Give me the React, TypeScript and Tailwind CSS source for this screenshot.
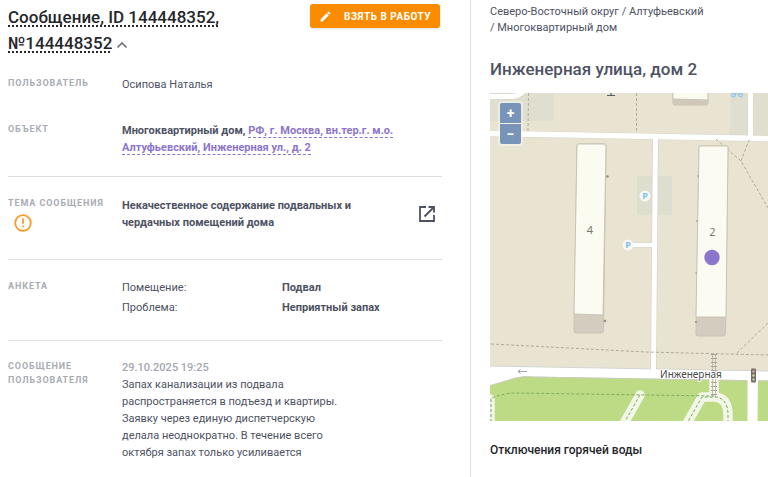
import type { ReactNode } from "react";

function Row({ label, extra, children, className = "" }: { label: string; extra?: ReactNode; children: ReactNode; className?: string }) {
    return (
        <div className={`grid grid-cols-[114px_1fr] ${className}`}>
            <dt className="text-[9px] leading-[14px] font-bold tracking-widest uppercase text-[#a9acb4]">
                {label}
                {extra}
            </dt>
            <dd className="text-[11px] leading-[17px] text-[#4d5263]">{children}</dd>
        </div>
    );
}

function WarningIcon() {
    return (
        <svg className="mt-1 ml-1.5 size-[18px]" viewBox="0 0 18 18" fill="none" stroke="#fb9a2c" strokeWidth="1.8">
            <circle cx="9" cy="9" r="7.8" />
            <path d="M9 4.6v5.2M9 11.4v1.8" />
        </svg>
    );
}

function Parking({ x, y }: { x: number; y: number }) {
    return (
        <g>
            <circle cx={x} cy={y} r="5.5" fill="#f8f7f2" />
            <text x={x} y={y + 3} textAnchor="middle" fontSize="9" fontWeight="700" fill="#83bfec" fontFamily="'Noto Sans', sans-serif">
                P
            </text>
        </g>
    );
}

function StreetMap() {
    return (
        <svg className="block h-full w-full" viewBox="0 0 278 328" preserveAspectRatio="xMinYMin slice" role="img" aria-label="Карта">
            <rect width="278" height="328" fill="#e9e4d1" />

            {/* Paved areas */}
            <path d="M0 0H64V28H0Z" fill="#e0decf" />
            <path d="M240 0H278V44H240Z" fill="#e0decf" />
            <path d="M147 83H182V122H147Z" fill="#dedece" />

            {/* Roads */}
            <g fill="none" stroke="#d8d5cb">
                <path d="M0 3.500H22Q31 3 36-5" strokeWidth="6" />
                <path d="M0 40.500L278 45.500" strokeWidth="6.500" />
                <path d="M260.500 0V44" strokeWidth="6" />
                <path d="M165.500 43L163.500 280" strokeWidth="6.500" />
                <path d="M143 152H163" strokeWidth="5" />
            </g>
            <path d="M-1 273L279 278V288L42 284Q34 283 26 285L-1 293Z" fill="#fff" stroke="#d4d5d1" strokeWidth="1" />
            <g fill="none" stroke="#fff">
                <path d="M0 3.500H22Q31 3 36-5" strokeWidth="5" />
                <path d="M0 40.500L278 45.500" strokeWidth="5.500" />
                <path d="M260.500 0V44" strokeWidth="5" />
                <path d="M165.500 42L163.500 280" strokeWidth="5" />
                <path d="M143 152H163" strokeWidth="4" />
            </g>

            {/* Park */}
            <path d="M-1 293L26 285Q34 283 42 284L279 288V329H-1Z" fill="#bcdb84" stroke="#c9ceba" strokeWidth="1" />
            <path d="M257.500 284H268L267.500 328H257.500Z" fill="#fff" />
            <g fill="none" stroke="#f3f7e8" strokeWidth="9.500" strokeLinejoin="round" strokeLinecap="round">
                <path d="M150 302L133 332" />
                <path d="M196 332L212 304H226Q238 306 238 322V332" />
                <path d="M0 306V332" />
            </g>
            <path d="M224 285V304" stroke="#f3f7e8" strokeWidth="9.500" />
            <g fill="none" stroke="#74a866" strokeWidth="1" strokeDasharray="3 2">
                <path d="M150 302L133 332" />
                <path d="M196 332L212 304H226Q238 306 238 322V332" />
                <path d="M1 306V328" />
            </g>

            {/* Footways */}
            <g fill="none" stroke="#b0ab98" strokeWidth="1" strokeDasharray="3 2">
                <path d="M38.500 0L38 38" />
                <path d="M146.500 0V40" />
                <path d="M226 46L251 68L278 115M251 68L259 47" />
                <path d="M1 251L156 259L278 262" />
                <path d="M247 260L278 230" />
            </g>
            <path d="M2 305Q14 300 26 300L224 303" fill="none" stroke="#82aa60" strokeWidth="1" strokeDasharray="3 2" />
            <path d="M224 261V304" stroke="#a5a39a" strokeWidth="6" strokeDasharray="1 3" />
            <path d="M222.500 261V304M225.500 261V304" stroke="#aaa99d" strokeWidth="0.700" />

            {/* Buildings */}
            <g strokeWidth="1" stroke="#c9c4b3">
                <path d="M183 0H218V10Q218 12 216 12H185Q183 12 183 10Z" fill="#d0c9bb" />
                <path d="M183 -1H218V7L183 6Z" fill="#fbfaf0" />
                <path d="M88 51H114Q116 51 116 53L113.500 238Q113.500 240 111 240H86Q84 240 84 238L87 53Q87 51 88 51Z" fill="#d4ccbe" />
                <path d="M88 51H114Q116 51 116 53L113 222L84 221L87 53Q87 51 88 51Z" fill="#fbfbf2" />
                <path d="M210 53H237Q238 53 238 55L235.500 241Q235.500 243 233 243H208Q206 243 206 241L209 55Q209 53 210 53Z" fill="#d4ccbe" />
                <path d="M210 53H237Q238 53 238 55L236 224H206L209 55Q209 53 210 53Z" fill="#fbfbf2" />
            </g>
            <g fill="#918d85">
                <circle cx="117.500" cy="83.500" r="1.300" />
                <circle cx="115" cy="228" r="1.300" />
                <circle cx="208" cy="83" r="0.800" />
                <circle cx="207" cy="128" r="0.800" />
                <circle cx="206" cy="180" r="0.800" />
                <circle cx="206" cy="229" r="1" />
            </g>

            {/* Map symbols */}
            <path d="M117 2.500H125M121 0V2" stroke="#555b68" strokeWidth="1.200" />
            <g fill="none" stroke="#8dc5ef" strokeWidth="1.200">
                <circle cx="243.500" cy="2" r="1.800" />
                <circle cx="250.500" cy="2" r="1.800" />
                <path d="M244 2L248-1L250 2" />
            </g>
            <Parking x={155} y={103} />
            <Parking x={138} y={152} />
            <path d="M37 278.500H28M30.500 276.500L28 278.500L30.500 280.500" fill="none" stroke="#858b98" strokeWidth="0.800" />
            <g>
                <rect x="261" y="275.500" width="5" height="14" rx="1" fill="#756d65" />
                <circle cx="263.500" cy="278.500" r="1.300" fill="#d7a4a0" />
                <circle cx="263.500" cy="282.500" r="1.300" fill="#ddd095" />
                <circle cx="263.500" cy="286.500" r="1.300" fill="#a8cca0" />
            </g>

            <g fontFamily="'Noto Sans', sans-serif" fill="#77766f" textAnchor="middle">
                <text x="100" y="141" fontSize="11">4</text>
                <text x="222.500" y="143" fontSize="11">2</text>
                <text x="201" y="285" fontSize="10" fill="#4c4c4c" stroke="#fff" strokeWidth="2" paintOrder="stroke">Инженерная</text>
            </g>
            <circle cx="222" cy="164.500" r="7.700" fill="#8c75cc" />
        </svg>
    );
}

export default function App() {
    return (
        <div className="grid min-h-screen grid-cols-[471fr_297fr] bg-white font-['Roboto',sans-serif]">
            <main className="border-r border-[#dedfe2] pt-1 pr-7 pl-2">
                <header className="flex items-start justify-between">
                    <h1 className="w-56 text-[17px] leading-[26px] font-medium text-[#25262b]">
                        <span className="underline decoration-dotted decoration-2 underline-offset-2 [text-decoration-skip-ink:none]">
                            Сообщение, ID 144448352, №144448352
                        </span>
                        <button type="button" aria-label="Свернуть" className="ml-1 align-middle">
                            <svg className="block h-4 w-3" viewBox="0 0 12 16" fill="none" stroke="#6d7078" strokeWidth="1.6">
                                <path d="M1.500 10.500L6 6L10.500 10.500" />
                            </svg>
                        </button>
                    </h1>
                    <button type="button" className="mr-0.5 flex h-6 items-center gap-3 rounded-[3px] bg-[#fb8c00] px-[9px] text-[10px] font-bold tracking-wider text-white uppercase shadow">
                        <svg className="size-[13px]" viewBox="0 0 24 24" fill="currentColor">
                            <path d="M3 17.250V21h3.750L17.810 9.940l-3.750-3.750L3 17.250zM20.710 7.040a1 1 0 0 0 0-1.410l-2.340-2.340a1 1 0 0 0-1.410 0l-1.830 1.830 3.750 3.750 1.830-1.830z" />
                        </svg>
                        Взять в работу
                    </button>
                </header>

                <dl>
                    <Row label="Пользователь" className="pt-5">Осипова Наталья</Row>
                    <Row label="Объект" className="border-b border-[#dcdde0] pt-[29px] pb-5">
                        <p className="max-w-[290px] font-bold">
                            Многоквартирный дом,{" "}
                            <a href="#object" className="border-b border-dashed border-[#8c75cc] text-[#8c75cc]">
                                РФ, г. Москва, вн.тер.г. м.о. Алтуфьевский, Инженерная ул., д. 2
                            </a>
                        </p>
                    </Row>
                    <Row label="Тема сообщения" extra={<WarningIcon />} className="border-b border-[#dcdde0] pt-[19px] pb-[27px]">
                        <div className="flex items-center justify-between">
                            <p className="max-w-[250px] pt-px font-bold">Некачественное содержание подвальных и чердачных помещений дома</p>
                            <a href="#topic" aria-label="Открыть" className="mr-1.5">
                                <svg className="size-[18px]" viewBox="0 0 18 18" fill="none" stroke="#4d5263" strokeWidth="1.800">
                                    <path d="M8 2H2V16H16V10M10.500 2H16V7.500M16 2L6.500 11.500" />
                                </svg>
                            </a>
                        </div>
                    </Row>
                    <Row label="Анкета" className="border-b border-[#dcdde0] pt-[19px] pb-6">
                        <div className="grid grid-cols-2 gap-y-[3px]">
                            <span>Помещение:</span>
                            <b>Подвал</b>
                            <span>Проблема:</span>
                            <b>Неприятный запах</b>
                        </div>
                    </Row>
                    <Row label="Сообщение пользователя" className="pt-[18px]">
                        <time className="block font-medium text-[#a3a7b0]" dateTime="2025-10-29T19:25">29.10.2025 19:25</time>
                        <p className="max-w-[225px]">
                            Запах канализации из подвала распространяется в подъезд и квартиры. Заявку через единую диспетчерскую делала
                            неоднократно. В течение всего октября запах только усиливается
                        </p>
                    </Row>
                </dl>
            </main>

            <aside className="min-w-0 pt-1 pl-[19px] text-[#4d5263]">
                <nav className="max-w-[215px] text-[11px] leading-4">Северо-Восточный округ / Алтуфьевский / Многоквартирный дом</nav>
                <h2 className="pt-[21px] text-[17px] leading-6 font-medium">Инженерная улица, дом 2</h2>
                <div className="relative mt-3 h-[328px] overflow-hidden">
                    <StreetMap />
                    <div className="absolute top-2 left-2 flex flex-col gap-px rounded bg-white/40 p-0.5 text-[14px] leading-none font-bold text-white">
                        <button type="button" aria-label="Приблизить" className="h-5 w-[21px] rounded-t-xs bg-[#7895b9]">+</button>
                        <button type="button" aria-label="Отдалить" className="h-5 w-[21px] rounded-b-xs bg-[#7895b9]">−</button>
                    </div>
                </div>
                <h3 className="pt-5 text-[12px] leading-[18px] font-medium text-[#25262b]">Отключения горячей воды</h3>
            </aside>
        </div>
    );
}
